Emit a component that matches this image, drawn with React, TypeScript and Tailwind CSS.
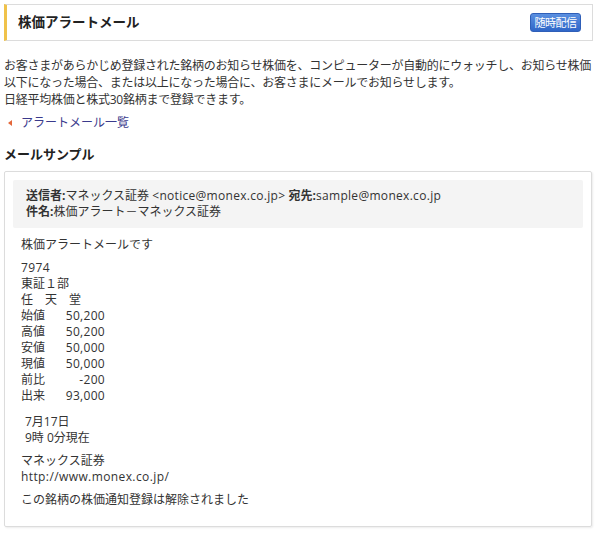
import React from "react";

const font = { fontFamily: '"Open Sans", "Noto Sans CJK JP", sans-serif' };

const prices: [string, string][] = [
  ["始値", "50,200"],
  ["高値", "50,200"],
  ["安値", "50,000"],
  ["現値", "50,000"],
  ["前比", "-200"],
  ["出来", "93,000"],
];

export default function App() {
  return (
    <div
      className="w-[600px] h-[534px] bg-white text-[#333] pl-[4px] pt-[4px] font-['Open_Sans','Noto_Sans_CJK_JP',sans-serif]"
      style={font}
    >
      {/* Header */}
      <div className="w-[589px] h-[37px] flex items-center justify-between border border-[#dcdcdc] border-l-[3px] border-l-[#f0c24a] pl-[11px] pr-[11px]">
        <h1 className="text-[13.5px] font-bold text-[#222] leading-none">株価アラートメール</h1>
        <span className="inline-flex items-center justify-center w-[51px] h-[19px] rounded-[3px] border border-[#2f5fb8] bg-gradient-to-b from-[#5b90e0] to-[#2f66c8] text-white text-[11px] leading-none tracking-[-0.5px]">
          随時配信
        </span>
      </div>

      {/* Description */}
      <div className="mt-[16px] text-[12px] leading-[17px] tracking-[-0.25px] whitespace-nowrap">
        <p>お客さまがあらかじめ登録された銘柄のお知らせ株価を、コンピューターが自動的にウォッチし、お知らせ株価</p>
        <p>以下になった場合、または以上になった場合に、お客さまにメールでお知らせします。</p>
        <p>日経平均株価と株式30銘柄まで登録できます。</p>
      </div>

      {/* Link */}
      <div className="mt-[6px] flex items-center h-[17px] text-[12px] leading-[17px]">
        <span className="ml-[4px] w-0 h-0 border-y-[3px] border-y-transparent border-r-[4px] border-r-[#e4673a]" />
        <a href="#" className="ml-[9px] text-[#3a3a8c]">アラートメール一覧</a>
      </div>

      {/* Mail sample heading */}
      <h2 className="mt-[15px] text-[13px] font-bold leading-[17px] text-[#222]">メールサンプル</h2>

      {/* Mail card */}
      <div className="mt-[8px] w-[588px] border border-[#dcdcdc] rounded-[2px] shadow-[1px_1px_2px_rgba(0,0,0,0.08)] pt-[8px] px-[8px] pb-[18px] text-[12px] leading-[16px]">
        <div className="bg-[#f4f4f4] rounded-[2px] px-[13px] py-[8px]">
          <p>
            <b className="font-bold">送信者:</b>マネックス証券{" "}
            <span className="tracking-[0.3px]">&lt;notice@monex.co.jp&gt;</span>{" "}
            <b className="font-bold">宛先:</b>
            <span className="tracking-[0.3px]">sample@monex.co.jp</span>
          </p>
          <p>
            <b className="font-bold">件名:</b>株価アラート－マネックス証券
          </p>
        </div>

        <div className="px-[8px]">
          <p className="mt-[9px]">株価アラートメールです</p>

          <div className="mt-[7px]">
            <p className="tracking-[0.4px]">7974</p>
            <p>東証１部</p>
            <p>任　天　堂</p>
            {prices.map(([k, v]) => (
              <div key={k} className="flex">
                <span className="w-[24px]">{k}</span>
                <span className="w-[60px] text-right tracking-[0.3px]">{v}</span>
              </div>
            ))}
          </div>

          <div className="mt-[10px] pl-[4px]">
            <p>7月17日</p>
            <p>9時 0分現在</p>
          </div>

          <div className="mt-[7px]">
            <p>マネックス証券</p>
            <p className="tracking-[0.4px]">http://www.monex.co.jp/</p>
          </div>

          <p className="mt-[7px]">この銘柄の株価通知登録は解除されました</p>
        </div>
      </div>
    </div>
  );
}
